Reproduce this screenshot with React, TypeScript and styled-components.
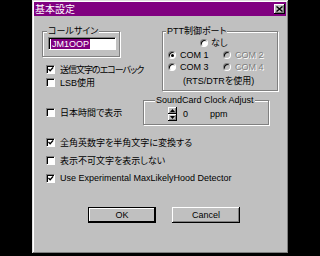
import React from "react";
import styled, { createGlobalStyle } from "styled-components";

const Global = createGlobalStyle`
  html, body { margin: 0; padding: 0; background: #000; }
  body {
    width: 320px; height: 256px; overflow: hidden;
    font-family: "Liberation Sans", "Noto Sans CJK JP", sans-serif;
    font-size: 9px; color: #000;
    font-feature-settings: "palt";
  }
  * { box-sizing: border-box; }
`;

const Window = styled.div`
  margin-left: 32px;
  width: 257px;
  height: 254px;
  background: #c0c0c0;
  padding: 2px 3px 3px 2px;
  box-shadow: inset -1px -1px #000, inset 1px 1px #dfdfdf,
    inset -2px -2px #808080, inset 2px 2px #fff;
  display: flex;
  flex-direction: column;
`;

const TitleBar = styled.div`
  height: 14px;
  background: #800080;
  display: flex;
  align-items: center;
  justify-content: space-between;
  padding: 0 1px 0 1px;
`;

const TitleText = styled.span`
  color: #fff;
  font-family: "Noto Sans CJK JP", sans-serif;
  font-size: 10px;
  line-height: 12px;
`;

const Raised = styled.div`
  background: #c0c0c0;
  box-shadow: inset -1px -1px #000, inset 1px 1px #fff, inset -2px -2px #808080;
  display: flex;
  align-items: center;
  justify-content: center;
`;

const CloseBtn = styled(Raised)`
  width: 11px;
  height: 10px;
`;

const Content = styled.div`
  display: flex;
  flex-direction: column;
  padding-left: 8px;
`;

const TopRow = styled.div`
  display: flex;
  align-items: flex-start;
  margin-top: 10px;
`;

const LeftCol = styled.div`
  width: 120px;
  display: flex;
  flex-direction: column;
`;

const Group = styled.fieldset<{ $w: number; $pl: number; $pb: number }>`
  width: ${(p) => p.$w}px;
  margin: 0;
  padding: 0 0 ${(p) => p.$pb}px ${(p) => p.$pl}px;
  border: 1px solid #808080;
  box-shadow: inset 1px 1px #fff, 1px 1px #fff;
  min-width: 0;
`;

const Legend = styled.legend<{ $ml: number }>`
  padding: 0 1px;
  margin-left: ${(p) => p.$ml}px;
  line-height: 11px;
  height: 11px;
  background: #c0c0c0;
  white-space: nowrap;
`;

const EditBox = styled.div`
  width: 68px;
  height: 13px;
  background: #fff;
  border-top: 1px solid #808080;
  border-left: 1px solid #808080;
  border-bottom: 1px solid #fff;
  border-right: 1px solid #fff;
  box-shadow: inset 1px 1px #000;
  display: flex;
  align-items: center;
  padding-left: 2px;
`;

const Selected = styled.span`
  background: #800080;
  color: #fff;
  line-height: 10px;
  padding: 0 1px;
  font-size: 9px;
`;

const CheckRow = styled.div<{ $mt: number }>`
  display: flex;
  align-items: center;
  height: 12px;
  gap: 5px;
  padding-left: 4px;
  margin-top: ${(p) => p.$mt}px;
  white-space: nowrap;
`;

const CheckText = styled.span<{ $ls?: number }>`
  letter-spacing: ${(p) => p.$ls ?? 0}px;
`;

const Box = styled.div`
  width: 9px;
  height: 9px;
  flex: none;
  background: #fff;
  border-top: 1px solid #808080;
  border-left: 1px solid #808080;
  border-bottom: 1px solid #fff;
  border-right: 1px solid #fff;
  box-shadow: inset 1px 1px #000;
  display: flex;
  align-items: center;
  justify-content: center;
`;

const Check = ({ on }: { on?: boolean }) => (
  <Box>
    {on && (
      <svg width="7" height="7" viewBox="0 0 7 7" style={{ marginLeft: 1, marginTop: 1 }}>
        <path d="M0.5 3 L2.5 5 L6 1" fill="none" stroke="#000" strokeWidth="1.6" />
      </svg>
    )}
  </Box>
);

const RadioCircle = styled.div<{ $disabled?: boolean }>`
  width: 8px;
  height: 8px;
  flex: none;
  border-radius: 50%;
  background: ${(p) => (p.$disabled ? "#c0c0c0" : "#fff")};
  border: 1px solid;
  border-color: #808080 #fff #fff #808080;
  box-shadow: inset 1px 1px #000;
  display: flex;
  align-items: center;
  justify-content: center;
`;

const Dot = styled.div`
  width: 3px;
  height: 3px;
  border-radius: 50%;
  background: #000;
`;

const RadioItem = styled.div<{ $w?: number; $gap?: number }>`
  display: flex;
  align-items: center;
  gap: ${(p) => p.$gap ?? 4}px;
  width: ${(p) => (p.$w ? `${p.$w}px` : "auto")};
  white-space: nowrap;
`;

const Label = styled.span<{ $disabled?: boolean }>`
  color: ${(p) => (p.$disabled ? "#808080" : "#000")};
  text-shadow: ${(p) => (p.$disabled ? "1px 1px #fff" : "none")};
  line-height: 12px;
`;

const Radio = ({
  label,
  on,
  disabled,
  w,
  gap,
}: {
  label: string;
  on?: boolean;
  disabled?: boolean;
  w?: number;
  gap?: number;
}) => (
  <RadioItem $w={w} $gap={gap}>
    <RadioCircle $disabled={disabled}>{on && <Dot />}</RadioCircle>
    <Label $disabled={disabled}>{label}</Label>
  </RadioItem>
);

const RadioRow = styled.div<{ $pl?: number }>`
  display: flex;
  align-items: center;
  height: 12px;
  padding-left: ${(p) => p.$pl ?? 0}px;
`;

const Note = styled.div`
  margin-top: 2px;
  padding-left: 15px;
  line-height: 12px;
  white-space: nowrap;
`;

const MidRow = styled.div`
  display: flex;
  align-items: flex-start;
  margin-top: 4px;
`;

const MidLeft = styled.div`
  width: 101px;
  display: flex;
  flex-direction: column;
`;

const SpinRow = styled.div`
  display: flex;
  align-items: center;
  height: 16px;
`;

const Spinner = styled.div`
  display: flex;
  flex-direction: column;
  width: 9px;
`;

const SpinBtn = styled(Raised)`
  width: 9px;
  height: 7px;
`;

const SpinValue = styled.span`
  margin-left: 6px;
  width: 27px;
`;

const BottomChecks = styled.div`
  display: flex;
  flex-direction: column;
`;

const ButtonRow = styled.div`
  display: flex;
  margin-top: 23px;
  padding-left: 46px;
  gap: 16px;
`;

const Button = styled.div<{ $default?: boolean }>`
  width: 68px;
  height: 16px;
  background: #c0c0c0;
  display: flex;
  align-items: center;
  justify-content: center;
  font-size: 9px;
  box-shadow: ${(p) =>
    p.$default
      ? "inset 0 0 0 1px #000, inset -2px -2px #000, inset 2px 2px #fff"
      : "inset -1px -1px #000, inset 1px 1px #fff, inset -2px -2px #808080"};
`;

export default function App() {
  return (
    <>
      <Global />
      <Window>
        <TitleBar>
          <TitleText>基本設定</TitleText>
          <CloseBtn>
            <svg width="7" height="6" viewBox="0 0 7 6">
              <path d="M0.5 0.5 L6.5 5.5 M6.5 0.5 L0.5 5.5" stroke="#000" strokeWidth="1.4" />
            </svg>
          </CloseBtn>
        </TitleBar>
        <Content>
          <TopRow>
            <LeftCol>
              <Group $w={78} $pl={5} $pb={6}>
                <Legend $ml={-1}>コールサイン</Legend>
                <EditBox>
                  <Selected>JM1OOP</Selected>
                </EditBox>
              </Group>
              <CheckRow $mt={6}>
                <Check on />
                <CheckText $ls={-1}>送信文字のエコーバック</CheckText>
              </CheckRow>
              <CheckRow $mt={1}>
                <Check />
                <CheckText>LSB使用</CheckText>
              </CheckRow>
            </LeftCol>
            <Group $w={116} $pl={5} $pb={3}>
              <Legend $ml={-2}>PTT制御ポート</Legend>
              <RadioRow $pl={32}>
                <Radio label="なし" gap={3} />
              </RadioRow>
              <RadioRow>
                <Radio label="COM 1" on w={55} />
                <Radio label="COM 2" disabled />
              </RadioRow>
              <RadioRow>
                <Radio label="COM 3" w={55} />
                <Radio label="COM 4" disabled />
              </RadioRow>
              <Note>(RTS/DTRを使用)</Note>
            </Group>
          </TopRow>
          <MidRow>
            <MidLeft>
              <CheckRow $mt={11}>
                <Check />
                <CheckText>日本時間で表示</CheckText>
              </CheckRow>
            </MidLeft>
            <Group $w={126} $pl={24} $pb={2}>
              <Legend $ml={-13}>SoundCard Clock Adjust</Legend>
              <SpinRow>
                <Spinner>
                  <SpinBtn>
                    <svg width="5" height="3" viewBox="0 0 5 3">
                      <path d="M0 3 L2.5 0 L5 3 Z" fill="#000" />
                    </svg>
                  </SpinBtn>
                  <SpinBtn>
                    <svg width="5" height="3" viewBox="0 0 5 3">
                      <path d="M0 0 L2.5 3 L5 0 Z" fill="#000" />
                    </svg>
                  </SpinBtn>
                </Spinner>
                <SpinValue>0</SpinValue>
                <span>ppm</span>
              </SpinRow>
            </Group>
          </MidRow>
          <BottomChecks>
            <CheckRow $mt={11}>
              <Check on />
              <CheckText>全角英数字を半角文字に変換する</CheckText>
            </CheckRow>
            <CheckRow $mt={6}>
              <Check />
              <CheckText>表示不可文字を表示しない</CheckText>
            </CheckRow>
            <CheckRow $mt={6}>
              <Check on />
              <CheckText>Use Experimental MaxLikelyHood Detector</CheckText>
            </CheckRow>
          </BottomChecks>
          <ButtonRow>
            <Button $default>OK</Button>
            <Button>Cancel</Button>
          </ButtonRow>
        </Content>
      </Window>
    </>
  );
}
